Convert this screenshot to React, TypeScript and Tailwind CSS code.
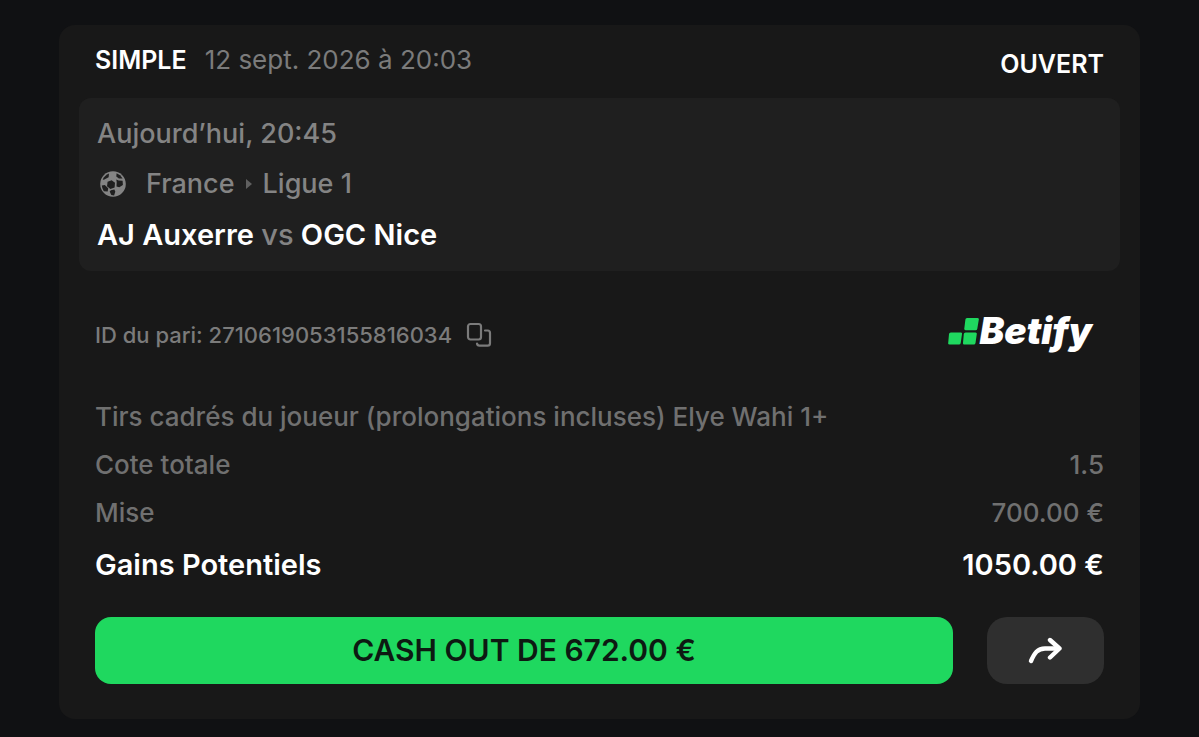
type Row = { label: string; value?: string }

const ROWS: Row[] = [
  { label: "Tirs cadrés du joueur (prolongations incluses) Elye Wahi 1+" },
  { label: "Cote totale", value: "1.5" },
  { label: "Mise", value: "700.00 €" },
]

const BallIcon = () => (
  <svg viewBox="0 0 26 26" className="size-[26px]" aria-hidden="true">
    <circle cx="13" cy="13" r="12.8" fill="currentColor" />
    <g fill="#1f1f1f">
      <path d="M7.6 10.8l4-1.6 3.4 2.6-.4 4.6-4.200 1.600-3.400-2.800z" />
      <path d="M9 2.500L8.600 6.200 3.900 8.700 2.700 8.600A11.400 11.400 0 0 1 9 2.500z" />
      <path d="M16.600 2.300a11.400 11.400 0 0 1 6 5.100l-3.700.2-2.600-2.100z" />
      <path d="M16.300 8.400l2.300 1 4 .4.3 4.200-3.600 2.200-2.800-.6.200-4.600z" />
      <path d="M1.800 14.600l3-.5 3.400 3.200-.5 3.300-3.900-.3a11.400 11.400 0 0 1-2-5.700z" />
      <path d="M9.700 20.400l1.200-1.200 3.500-.7.900 2.300-1.200 3.600-2.800-.3z" />
    </g>
  </svg>
)

const CopyIcon = () => (
  <svg viewBox="0 0 26 26" className="size-[26px]" fill="none" stroke="currentColor" strokeWidth="2.2" strokeLinecap="round" strokeLinejoin="round" aria-hidden="true">
    <rect x="2" y="2" width="13" height="15.5" rx="2.4" />
    <path d="M19 8.5h2.6a2.4 2.4 0 0 1 2.4 2.4v10.3a2.4 2.4 0 0 1-2.4 2.4h-8.2a2.4 2.4 0 0 1-2.4-2.1" />
  </svg>
)

const ShareIcon = () => (
  <svg viewBox="0 0 36 28" className="h-7 w-9" fill="none" stroke="#fff" strokeWidth="4.4" strokeLinecap="round" strokeLinejoin="round" aria-hidden="true">
    <path d="M3 24C6.500 16 9.500 11.500 17 11.500H30" />
    <path d="M22 3 31.500 11.500 22 20.500" />
  </svg>
)

const Logo = () => (
  <div className="flex items-start">
    <svg viewBox="0 0 31 28" className="mt-4 h-7 w-[31px]" fill="#1fd85f" aria-hidden="true">
      <path d="M19 1h10.400a1.400 1.400 0 0 1 1.400 1.700l-1.500 9a1.800 1.800 0 0 1-1.800 1.500h-9.800a1.400 1.400 0 0 1-1.400-1.700l1.100-8.900A1.800 1.800 0 0 1 19 1z" />
      <path d="M2.800 15.400h9.800a1.400 1.400 0 0 1 1.400 1.700l-1.300 9a1.800 1.800 0 0 1-1.800 1.500H1.600a1.400 1.400 0 0 1-1.400-1.700L1 17a1.800 1.800 0 0 1 1.800-1.600z" />
      <path d="M17.600 15.400h9.800a1.400 1.400 0 0 1 1.400 1.700l-1.300 9a1.800 1.800 0 0 1-1.800 1.500h-9.300a1.400 1.400 0 0 1-1.400-1.700l.8-8.900a1.800 1.800 0 0 1 1.800-1.600z" />
    </svg>
    <span className="text-[37px] leading-[60px] font-black text-white italic">Betify</span>
  </div>
)

export default function App() {
  return (
    <main className="min-h-screen bg-[#101113] px-[59px] pt-[25px] pb-[18px] font-['Inter',sans-serif]">
      <article className="rounded-2xl bg-[#181818] px-5 pt-[19px] pb-[35px]">
        <header className="flex justify-between px-4 text-[25px] leading-8 font-semibold text-white">
          <p className="flex gap-[18px]">
            <span>SIMPLE</span>
            <time dateTime="2026-09-12T20:03" className="text-[26px] font-normal text-[#7b7b7b]">12 sept. 2026 à 20:03</time>
          </p>
          <p className="pt-1">OUVERT</p>
        </header>

        <section className="mt-[18px] rounded-xl bg-[#1f1f1f] px-[18px] pt-5 pb-[18px] text-[27px] leading-8 font-medium text-[#848484]">
          <p>Aujourd’hui, 20:45</p>
          <p className="mt-[18px] flex items-center pl-[3px]">
            <BallIcon />
            <span className="ml-5">France</span>
            <svg viewBox="0 0 6 10" className="mx-[11px] h-[10px] w-[6px]" fill="#606060" aria-hidden="true">
              <path d="M0 0l6 5-6 5z" />
            </svg>
            <span>Ligue 1</span>
          </p>
          <h1 className="mt-[17px] text-[29px] leading-9 font-semibold text-white">
            AJ Auxerre <span className="font-medium text-[#848484]">vs</span> OGC Nice
          </h1>
        </section>

        <div className="mt-[30px] flex items-center justify-between pr-7 pl-4">
          <div className="flex items-center gap-[14px] pt-2 text-[22px] leading-8 font-medium text-[#7b7b7b]">
            <p>ID du pari: 2710619053155816034</p>
            <button type="button" aria-label="Copier l’ID du pari">
              <CopyIcon />
            </button>
          </div>
          <Logo />
        </div>

        <dl className="mt-[40px] flex flex-col gap-4 px-4 text-[26px] leading-8 font-medium text-[#707070]">
          {ROWS.map((row) => (
            <div key={row.label} className="flex justify-between">
              <dt>{row.label}</dt>
              {row.value && <dd>{row.value}</dd>}
            </div>
          ))}
          <div className="flex justify-between text-[29px] leading-10 font-semibold text-white">
            <dt>Gains Potentiels</dt>
            <dd>1050.00 €</dd>
          </div>
        </dl>

        <div className="mt-8 flex gap-[34px] px-4">
          <button type="button" className="h-[67px] flex-1 rounded-2xl bg-[#1fd85f] text-[30px] font-semibold text-[#0d1a12]">
            CASH OUT DE 672.00 €
          </button>
          <button type="button" aria-label="Partager" className="flex h-[67px] w-[117px] items-center justify-center rounded-[20px] bg-[#2f2f2f]">
            <ShareIcon />
          </button>
        </div>
      </article>
    </main>
  )
}
